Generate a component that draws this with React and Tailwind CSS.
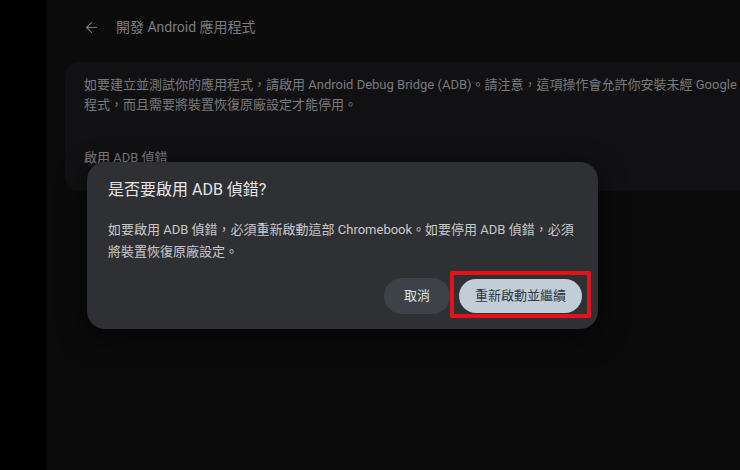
import { ArrowLeft } from "lucide-react";

const font = { fontFamily: 'Roboto, "Noto Sans CJK TC", sans-serif' };

function SettingsPage() {
  return (
    <div className="flex-1 min-w-0 flex flex-col bg-[#0b0b0c] pl-[18px]">
      {/* Header */}
      <div className="h-[54px] flex items-center pl-[18px] gap-[16px]">
        <ArrowLeft className="w-[17px] h-[17px] text-[#777]" strokeWidth={1.6} />
        <span className="text-[14px] text-[#7c7c7e]">開發 Android 應用程式</span>
      </div>

      {/* Card */}
      <div className="mt-[8px] w-[760px] shrink-0 rounded-[14px] bg-[#111113] pl-[19px] pt-[13px] pb-[23px]">
        <div className="text-[13px] leading-[20px] text-[#7a7a7c] whitespace-nowrap">
          如要建立並測試你的應用程式，請啟用 Android Debug Bridge (ADB)。請注意，這項操作會允許你安裝未經 Google 驗證的應用
        </div>
        <div className="text-[13px] leading-[20px] text-[#7a7a7c] whitespace-nowrap">
          程式，而且需要將裝置恢復原廠設定才能停用。
        </div>
        <div className="mt-[33px] text-[13px] leading-[20px] text-[#7e7e80]">啟用 ADB 偵錯</div>
      </div>
    </div>
  );
}

function AdbDialog() {
  return (
    <div className="absolute left-[87px] top-[162px] w-[511px] rounded-[18px] bg-[#2f3033] shadow-[0_8px_28px_rgba(0,0,0,0.6)] px-[21px] pt-[17px] pb-[15px]">
      <h2 className="text-[16px] leading-[22px] text-[#e4e4e6]">是否要啟用 ADB 偵錯?</h2>
      <p className="mt-[18px] text-[13px] leading-[22px] text-[#c8c8ca]">
        如要啟用 ADB 偵錯，必須重新啟動這部 Chromebook。如要停用 ADB 偵錯，必須
        <br />
        將裝置恢復原廠設定。
      </p>
      <div className="mt-[15px] mr-[-5px] flex justify-end items-center gap-[9px]">
        <button className="h-[36px] px-[20px] rounded-full bg-[#3c4247] text-[13px] text-[#dfe3e7]">
          取消
        </button>
        <div className="relative">
          <button className="h-[34px] w-[123px] rounded-full bg-[#c3cdd7] text-[13px] text-[#2e3943]">
            重新啟動並繼續
          </button>
          {/* annotation box */}
          <div className="absolute left-[-9px] right-[-9px] top-[-8px] bottom-[-5px] border-[4px] border-[#e3121b] rounded-[2px]" />
        </div>
      </div>
    </div>
  );
}

export default function App() {
  return (
    <div className="relative flex w-[740px] h-[470px] overflow-hidden bg-black" style={font}>
      <div className="w-[47px] shrink-0 bg-black" />
      <SettingsPage />
      <AdbDialog />
    </div>
  );
}
